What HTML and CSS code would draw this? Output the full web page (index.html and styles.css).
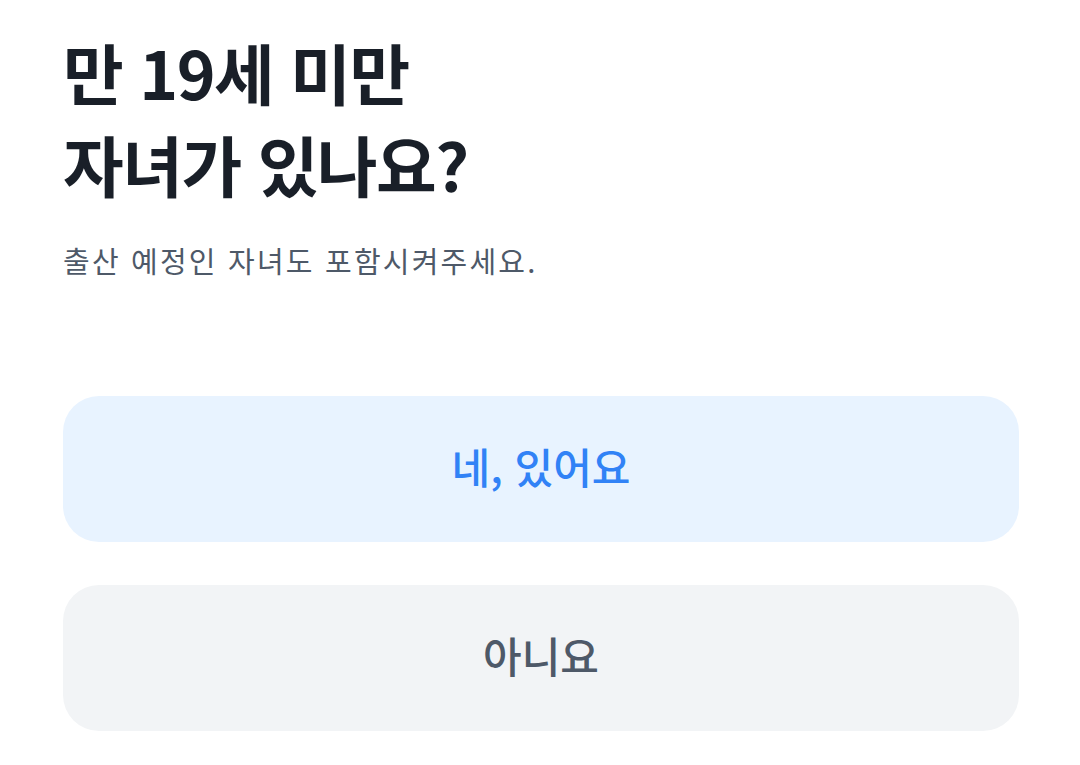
FILE: index.html
```html
<!DOCTYPE html>
<html lang="ko">
<head>
<meta charset="utf-8">
<link rel="stylesheet" href="styles.css">
</head>
<body>
<main class="page">
  <h1 class="title">만 19세 미만<br>자녀가 있나요?</h1>
  <p class="desc">출산 예정인 자녀도 포함시켜주세요.</p>
  <div class="options">
    <button class="opt opt-yes">네, 있어요</button>
    <button class="opt opt-no">아니요</button>
  </div>
</main>
</body>
</html>
```
FILE: styles.css
```css
html, body {
  margin: 0;
  padding: 0;
  background: #ffffff;
}
body {
  font-family: "Noto Sans CJK KR", "Noto Sans", sans-serif;
}
.page {
  padding: 25px 61px 0 63px;
}
.title {
  margin: 0;
  font-size: 66px;
  line-height: 92px;
  font-weight: 700;
  color: #191f28;
  letter-spacing: -1.5px;
}
.desc {
  margin: 31px 0 0;
  font-size: 29px;
  line-height: 40px;
  color: #4e5968;
  font-weight: 400;
  letter-spacing: 2.2px;
}
.options {
  margin-top: 116px;
  display: flex;
  flex-direction: column;
  gap: 43px;
}
.opt {
  border: none;
  height: 146px;
  border-radius: 36px;
  font-family: inherit;
  font-size: 42px;
  font-weight: 500;
  display: flex;
  align-items: center;
  justify-content: center;
  padding: 0 0 8px;
}
.opt-yes {
  background: #e8f3ff;
  color: #3182f6;
}
.opt-no {
  background: #f2f4f6;
  color: #4e5968;
}
```
